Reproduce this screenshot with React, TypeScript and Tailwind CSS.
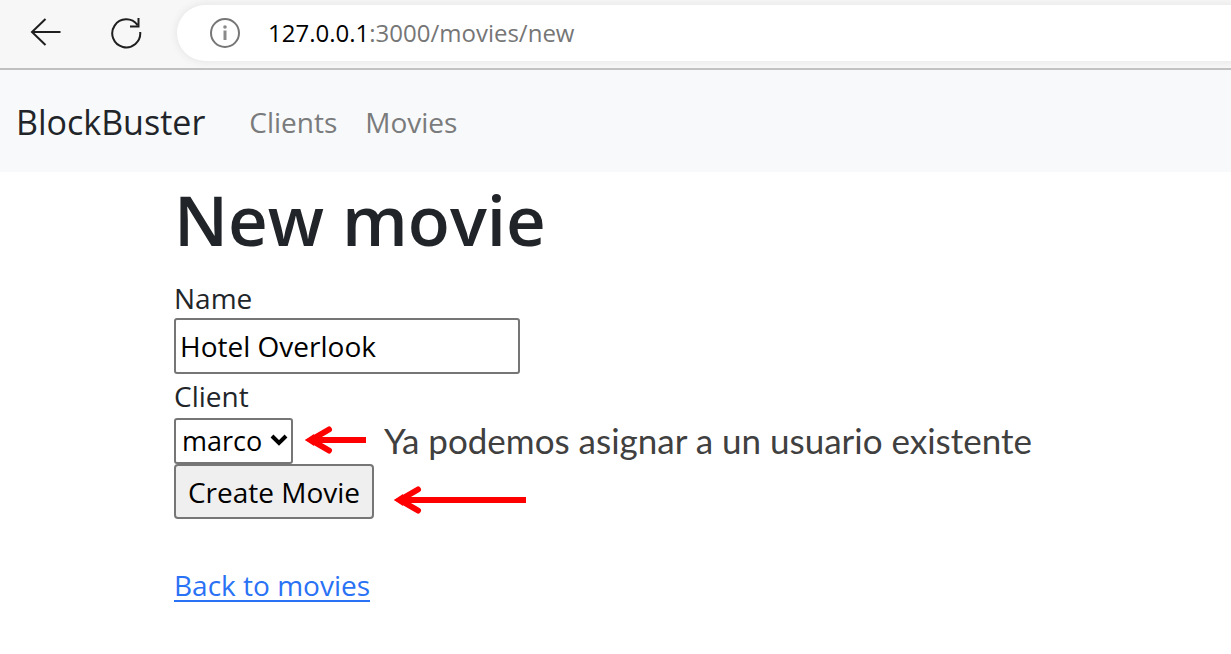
import React from "react";

function BackIcon() {
  return (
    <svg width="32" height="32" viewBox="0 0 32 32" fill="none" stroke="#1f1f1f" strokeWidth="2" aria-hidden="true">
      <path d="M30.500 15H2M15.500 2L2 15l13.500 13" />
    </svg>
  );
}

function ReloadIcon() {
  return (
    <svg width="32" height="32" viewBox="0 0 32 32" fill="none" stroke="#1f1f1f" strokeWidth="2" aria-hidden="true">
      <path d="M30.200 15A14 14 0 1 1 27.500 8M28.500 1v8.500h-8.500" />
    </svg>
  );
}

function InfoIcon() {
  return (
    <svg className="shrink-0" width="32" height="32" viewBox="0 0 32 32" fill="none" stroke="#767676" strokeWidth="2" aria-hidden="true">
      <circle cx="16" cy="16" r="14" />
      <path d="M16 13.500V23" stroke="#8a8a8a" strokeWidth="3" />
      <circle cx="16" cy="10" r="1.800" fill="#8a8a8a" stroke="none" />
    </svg>
  );
}

function Arrow({ length }: { length: number }) {
  return (
    <svg className="shrink-0" width={length} height="30" fill="none" stroke="#ff0000" aria-hidden="true">
      <path d={`M8 15H${length}`} strokeWidth="6" />
      <path d="M24 4.500L6 15l18 10.500" strokeWidth="6" strokeLinecap="round" />
      <path d="M0 15L9 9v12z" fill="#ff0000" stroke="none" />
    </svg>
  );
}

export default function App() {
  return (
    <div className="min-h-screen bg-white font-['Open_Sans',sans-serif] text-[28px] leading-10 text-[#212529]">
      <header className="flex h-[70px] items-center border-b-2 border-[#c0c0c0] bg-[#f7f7f7] pb-0.5 pl-[30px]">
        <button type="button" aria-label="Back" className="mr-12">
          <BackIcon />
        </button>
        <button type="button" aria-label="Reload" className="mr-[35px]">
          <ReloadIcon />
        </button>
        <div className="flex h-14 flex-1 items-center gap-[27px] rounded-l-full bg-white pl-8 text-2xl text-[#767676] shadow-[0_0_6px_2px_#e9e9e9]">
          <InfoIcon />
          <span>
            <span className="text-black">127.0.0.1</span>:3000/movies/new
          </span>
        </div>
      </header>

      <nav className="flex h-[102px] items-center bg-[#f8f9fa] pt-0.5 pl-4">
        <a href="#" className="mr-11 text-[34px]">BlockBuster</a>
        <div className="flex gap-7 text-[#7a7b7c]">
          <a href="#">Clients</a>
          <a href="#">Movies</a>
        </div>
      </nav>

      <main className="px-[174px] pt-1">
        <h1 className="mb-4 text-[69px] leading-[86px] font-semibold">New movie</h1>
        <form>
          <label htmlFor="name" className="block">Name</label>
          <input
            id="name"
            type="text"
            defaultValue="Hotel Overlook"
            className="block h-14 w-[346px] rounded-[3px] border-2 border-[#767676] px-1 text-black"
          />
          <label htmlFor="client" className="block h-11 leading-11">Client</label>
          <div className="flex items-center">
            <div className="relative">
              <select
                id="client"
                defaultValue="marco"
                className="block h-[46px] w-[119px] appearance-none rounded-[3px] border-2 border-[#767676] bg-white pl-1.5 text-[27px] text-black"
              >
                <option>marco</option>
              </select>
              <svg className="pointer-events-none absolute top-[15px] right-[5px]" width="18" height="14" fill="none" stroke="#000" strokeWidth="4" aria-hidden="true">
                <path d="M2 3l7 7 7-7" />
              </svg>
            </div>
            <div className="flex items-center gap-[18px] pb-0.5 pl-3">
              <Arrow length={61} />
              <p className="font-[Lato,sans-serif] text-[35px] whitespace-nowrap text-[#404040]">
                Ya podemos asignar a un usuario existente
              </p>
            </div>
          </div>
          <div className="flex items-end gap-5">
            <button type="submit" className="h-[55px] w-[200px] rounded-[4px] border-2 border-[#767676] bg-[#efefef] whitespace-nowrap text-black">
              Create Movie
            </button>
            <div className="flex pb-1">
              <Arrow length={132} />
            </div>
          </div>
        </form>
        <a href="#" className="mt-[46px] inline-block text-[#2a72f5] underline decoration-2 underline-offset-4">Back to movies</a>
      </main>
    </div>
  );
}
